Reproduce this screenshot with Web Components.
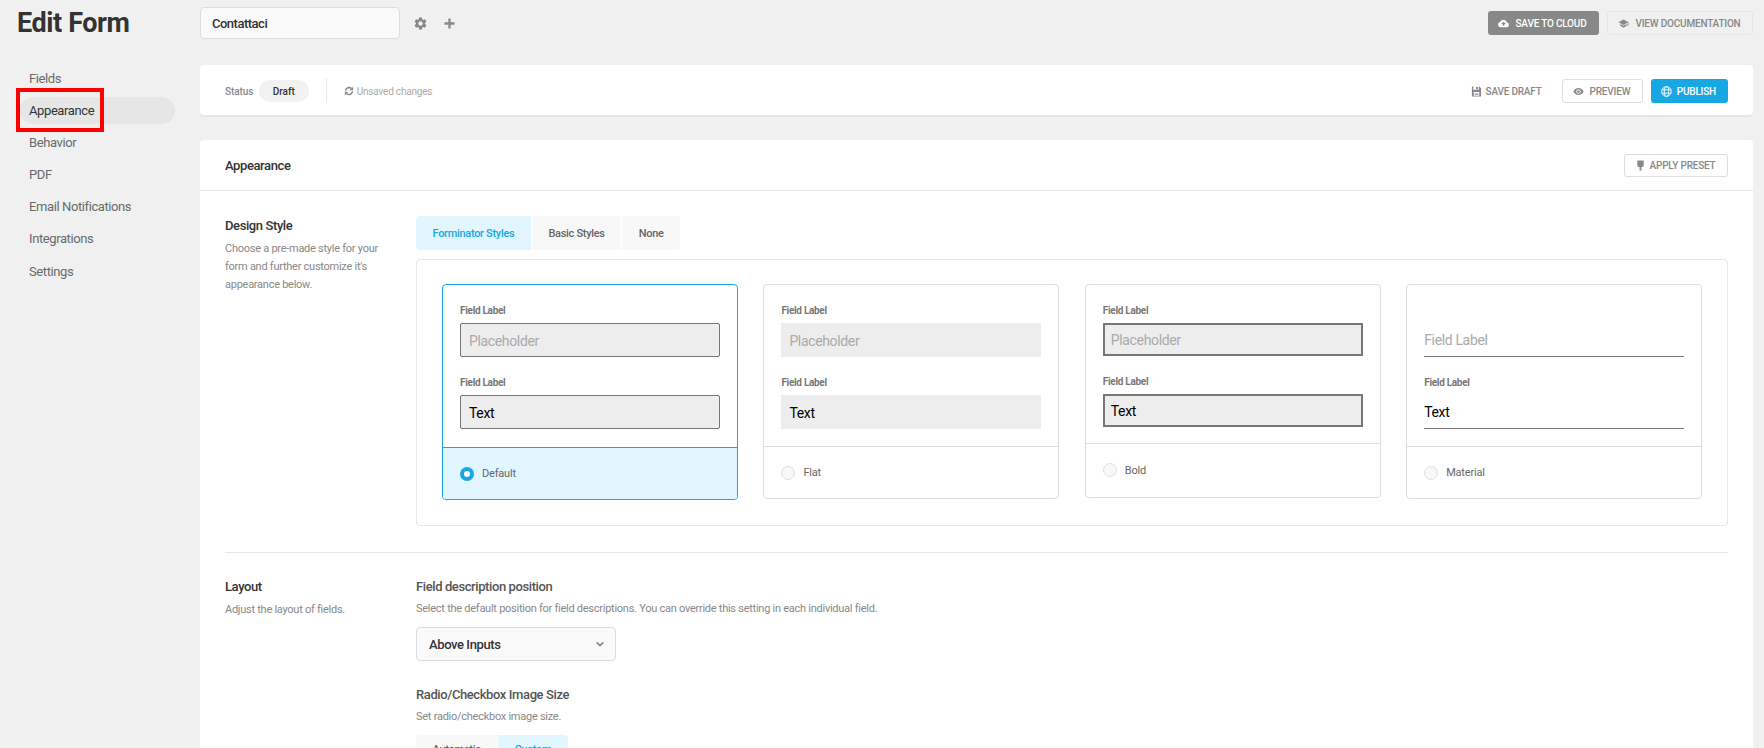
<!DOCTYPE html>
<html lang="en">
<head>
<meta charset="utf-8">
<title>Edit Form</title>
<style>
  html, body { margin: 0; height: 748px; overflow: hidden; background: #f0f0f0; }
  body { font-family: Roboto, "Liberation Sans", sans-serif; color: #333; }
</style>
</head>
<body>
<form-page>
  <nav-list slot="nav">
    <nav-item>Fields</nav-item>
    <nav-item active>Appearance</nav-item>
    <nav-item>Behavior</nav-item>
    <nav-item>PDF</nav-item>
    <nav-item>Email Notifications</nav-item>
    <nav-item>Integrations</nav-item>
    <nav-item>Settings</nav-item>
  </nav-list>

  <top-bar slot="top"></top-bar>
  <status-bar slot="main"></status-bar>

  <box-card slot="main" heading="Appearance">
    <ui-btn slot="action" kind="outline" icon="preset">Apply Preset</ui-btn>

    <settings-row heading="Design Style" text="Choose a pre-made style for your form and further customize it's appearance below.">
      <tab-group>
        <tab-item active>Forminator Styles</tab-item>
        <tab-item>Basic Styles</tab-item>
        <tab-item>None</tab-item>
      </tab-group>
      <style-panel>
        <style-card variant="default" selected>Default</style-card>
        <style-card variant="flat">Flat</style-card>
        <style-card variant="bold">Bold</style-card>
        <style-card variant="material">Material</style-card>
      </style-panel>
    </settings-row>

    <settings-row divided heading="Layout" text="Adjust the layout of fields.">
      <field-group heading="Field description position" text="Select the default position for field descriptions. You can override this setting in each individual field.">
        <select-box>Above Inputs</select-box>
      </field-group>
      <field-group heading="Radio/Checkbox Image Size" text="Set radio/checkbox image size." spaced>
        <tab-group style="--tab-text-top: 8px">
          <tab-item>Automatic</tab-item>
          <tab-item active>Custom</tab-item>
        </tab-group>
      </field-group>
    </settings-row>
  </box-card>
</form-page>

<script>
const ICONS = {
  gear: '<path fill="currentColor" d="M19.14 12.94c.04-.3.06-.61.06-.94 0-.32-.02-.64-.07-.94l2.03-1.58c.18-.14.23-.41.12-.61l-1.92-3.32c-.12-.22-.37-.29-.59-.22l-2.39.96c-.5-.38-1.03-.7-1.62-.94l-.36-2.54c-.04-.24-.24-.41-.48-.41h-3.84c-.24 0-.43.17-.47.41l-.36 2.54c-.59.24-1.13.57-1.62.94l-2.39-.96c-.22-.08-.47 0-.59.22L2.74 8.87c-.12.21-.08.47.12.61l2.03 1.58c-.05.3-.09.63-.09.94s.02.64.07.94l-2.03 1.58c-.18.14-.23.41-.12.61l1.92 3.32c.12.22.37.29.59.22l2.39-.96c.5.38 1.03.7 1.62.94l.36 2.54c.05.24.24.41.48.41h3.84c.24 0 .44-.17.47-.41l.36-2.54c.59-.24 1.13-.56 1.62-.94l2.39.96c.22.08.47 0 .59-.22l1.92-3.32c.12-.22.07-.47-.12-.61l-2.01-1.58zM12 15.6c-1.98 0-3.6-1.62-3.6-3.6s1.62-3.6 3.6-3.6 3.6 1.62 3.6 3.6-1.62 3.6-3.6 3.6z"/>',
  plus: '<path fill="none" stroke="currentColor" stroke-width="5" d="M12 1v22M1 12h22"/>',
  cloud: '<path fill="currentColor" d="M19.35 10.04C18.67 6.59 15.64 4 12 4 9.11 4 6.6 5.64 5.35 8.04 2.34 8.36 0 10.91 0 14c0 3.31 2.69 6 6 6h13c2.76 0 5-2.24 5-5 0-2.64-2.05-4.78-4.65-4.96zM14 13v4h-4v-4H7l5-5 5 5h-3z"/>',
  cap: '<path fill="currentColor" d="M5 13.18v4L12 21l7-3.82v-4L12 17l-7-3.82zM12 3L1 9l11 6 9-4.91V17h2V9L12 3z"/>',
  save: '<path fill="currentColor" fill-rule="evenodd" d="M2 1h3v7h12V1h1l4 4v18H2zM11 2h4v5h-4zM6 13v8h12v-8zM8 15h8v1.500H8zM8 18h8v1.500H8z"/>',
  eye: '<path fill="currentColor" d="M12 4.500C7 4.500 2.730 7.610 1 12c1.730 4.390 6 7.500 11 7.500s9.270-3.110 11-7.500c-1.730-4.390-6-7.500-11-7.500zM12 17c-2.760 0-5-2.240-5-5s2.240-5 5-5 5 2.240 5 5-2.240 5-5 5zm0-8c-1.660 0-3 1.340-3 3s1.340 3 3 3 3-1.340 3-3-1.340-3-3-3z"/>',
  globe: '<g fill="none" stroke="currentColor" stroke-width="2"><circle cx="12" cy="12" r="10.500"/><ellipse cx="12" cy="12" rx="4.800" ry="10.500"/><path d="M2 8.500h20M2 15.500h20"/></g>',
  preset: '<path fill="currentColor" d="M5 1h14v11a3 3 0 0 1-3 3h-2v8h-4v-8H8a3 3 0 0 1-3-3z"/>',
  sync: '<g fill="none" stroke="currentColor" stroke-width="3.500"><path d="M3.500 11A8.600 8.600 0 0 1 18 6.200"/><path d="M20.500 13A8.600 8.600 0 0 1 6 17.800"/></g><path fill="currentColor" d="M22 1.500V10h-8.500zM2 22.500V14h8.500z"/>',
  chevron: '<path fill="none" stroke="currentColor" stroke-width="4" d="M4 8l8 8 8-8"/>'
};

// shared helper, all elements below are plain shadow roots set in the class
class BaseEl extends HTMLElement {
  connectedCallback() {
    if (this.shadowRoot) return;
    this.attachShadow({ mode: 'open' }).innerHTML = this.render();
  }
}

class UiIcon extends BaseEl {
  render() {
    const size = this.getAttribute('size') || 11;
    return `
      <style>:host { display: inline-flex; flex: none; } svg { display: block; }</style>
      <svg width="${size}" height="${size}" viewBox="0 0 24 24">${ICONS[this.getAttribute('name')]}</svg>`;
  }
}

class UiBtn extends BaseEl {
  render() {
    return `
      <style>
        :host {
          display: inline-flex;
          align-items: center;
          gap: 6px;
          height: 24px;
          box-sizing: border-box;
          padding: 0 12px 0 10px;
          border-radius: 3px;
          font-size: 10px;
          font-weight: 500;
          letter-spacing: -0.2px;
          text-transform: uppercase;
          color: #888;
          white-space: nowrap;
        }
        :host([kind="dark"]) { background: #888; color: #fff; padding: 0 13px 0 10px; gap: 7px; }
        :host([kind="line"]) { border: 1.5px solid #e6e6e6; color: #888; padding: 0 11px 0 10px; }
        :host([kind="outline"]) { border: 1.5px solid #ddd; background: #fff; color: #888; padding: 0 12px 0 10px; }
        :host([kind="blue"]) { background: #17a8e3; color: #fff; gap: 4.500px; }
        :host([kind="plain"]) { padding: 0; gap: 4px; }
        :host([icon="preset"]) { height: 23px; gap: 4px; padding-right: 11.500px; }
      </style>
      <ui-icon name="${this.getAttribute('icon')}"></ui-icon>
      <slot></slot>`;
  }
}

class FormPage extends BaseEl {
  render() {
    return `
      <style>
        :host { display: flex; position: relative; height: 748px; overflow: hidden; }
        .side { width: 200px; flex: none; box-sizing: border-box; padding-top: 7px; }
        h1 {
          margin: 0 0 26px 17px;
          height: 32px;
          font-size: 27px;
          line-height: 32px;
          font-weight: 700;
          color: #333;
          letter-spacing: -0.4px;
        }
        .main { flex: 1; min-width: 0; margin-right: 11.5px; padding-top: 7px; }
        .stack { display: flex; flex-direction: column; gap: 25px; margin-top: 26px; }
        .marker {
          position: absolute;
          left: 16px;
          top: 88px;
          width: 88px;
          height: 44px;
          box-sizing: border-box;
          border: 4.5px solid #f00;
          pointer-events: none;
        }
      </style>
      <div class="side">
        <h1>Edit Form</h1>
        <slot name="nav"></slot>
      </div>
      <div class="main">
        <slot name="top"></slot>
        <div class="stack"><slot name="main"></slot></div>
      </div>
      <div class="marker"></div>`;
  }
}

class NavList extends BaseEl {
  render() {
    return `
      <style>:host { display: flex; flex-direction: column; gap: 5.100px; padding-left: 20px; width: 155px; }</style>
      <slot></slot>`;
  }
}

class NavItem extends BaseEl {
  render() {
    return `
      <style>
        :host {
          display: flex;
          align-items: center;
          height: 27px;
          padding-left: 9px;
          border-radius: 14px;
          font-size: 13px;
          letter-spacing: -0.4px;
          color: #6a6a6a;
        }
        :host([active]) { background: #e6e6e6; color: #333; }
      </style>
      <slot></slot>`;
  }
}

class TopBar extends BaseEl {
  render() {
    return `
      <style>
        :host { display: flex; align-items: center; height: 32px; color: #888; }
        .name {
          width: 200px;
          height: 32px;
          box-sizing: border-box;
          display: flex;
          align-items: center;
          padding-left: 11px;
          background: #fafafa;
          border: 1px solid #ddd;
          border-radius: 4px;
          font-size: 13px;
          font-weight: 500;
          letter-spacing: -0.5px;
          color: #333;
        }
        .tools { display: flex; align-items: center; gap: 16px; margin-left: 13px; }
        .end { margin-left: auto; display: flex; gap: 8px; }
      </style>
      <div class="name">Contattaci</div>
      <div class="tools">
        <ui-icon name="gear" size="15"></ui-icon>
        <ui-icon name="plus" size="11"></ui-icon>
      </div>
      <div class="end">
        <ui-btn kind="dark" icon="cloud">Save to Cloud</ui-btn>
        <ui-btn kind="line" icon="cap">View Documentation</ui-btn>
      </div>`;
  }
}

class StatusBar extends BaseEl {
  render() {
    return `
      <style>
        :host {
          display: flex;
          align-items: center;
          height: 50px;
          box-sizing: border-box;
          padding: 2px 24.500px 0 25px;
          background: #fff;
          border-radius: 4px;
          box-shadow: 0 2px 0 #e6e6e6;
        }
        .lbl { font-size: 10px; font-weight: 500; letter-spacing: -0.1px; color: #888; }
        .pill {
          margin-left: 5.500px;
          width: 50px;
          height: 22px;
          display: flex;
          align-items: center;
          justify-content: center;
          background: #f2f2f2;
          border-radius: 11px;
          font-size: 10px;
          font-weight: 500;
          color: #333;
        }
        .sep { width: 1px; height: 25px; background: #e6e6e6; margin: -2px 17px 0; }
        .saved { display: flex; align-items: center; gap: 3px; font-size: 10px; letter-spacing: -0.2px; color: #aaa; }
        .saved ui-icon { color: #888; }
        .end { margin-left: auto; display: flex; align-items: center; gap: 8px; }
        ui-btn[kind="plain"] { margin-right: 12px; }
      </style>
      <span class="lbl">Status</span>
      <span class="pill">Draft</span>
      <span class="sep"></span>
      <span class="saved"><ui-icon name="sync" size="10"></ui-icon>Unsaved changes</span>
      <div class="end">
        <ui-btn kind="plain" icon="save">Save Draft</ui-btn>
        <ui-btn kind="outline" icon="eye">Preview</ui-btn>
        <ui-btn kind="blue" icon="globe">Publish</ui-btn>
      </div>`;
  }
}

class BoxCard extends BaseEl {
  render() {
    return `
      <style>
        :host { display: block; background: #fff; border-radius: 4px; }
        header {
          display: flex;
          align-items: center;
          justify-content: space-between;
          height: 50px;
          padding: 0 24.500px 0 25px;
          border-bottom: 1px solid #e6e6e6;
        }
        h2 { margin: 0; font-size: 13px; font-weight: 500; letter-spacing: -0.4px; color: #333; }
        .body { padding: 25px 24.500px 0 25px; }
      </style>
      <header>
        <h2>${this.getAttribute('heading')}</h2>
        <slot name="action"></slot>
      </header>
      <div class="body"><slot></slot></div>`;
  }
}

class SettingsRow extends BaseEl {
  render() {
    return `
      <style>
        :host { display: grid; grid-template-columns: 191px 1fr; }
        :host([divided]) { margin-top: 26px; padding-top: 25px; border-top: 1px solid #e6e6e6; }
        h3 { margin: 1px 0 5px; font-size: 13px; line-height: 18px; font-weight: 500; letter-spacing: -0.4px; color: #333; }
        :host([divided]) h3 { margin: 0 0 4.500px; }
        p { margin: 0; width: 165px; font-size: 11px; line-height: 18px; letter-spacing: -0.26px; color: #888; }
      </style>
      <div>
        <h3>${this.getAttribute('heading')}</h3>
        <p>${this.getAttribute('text')}</p>
      </div>
      <div><slot></slot></div>`;
  }
}

class FieldGroup extends BaseEl {
  render() {
    return `
      <style>
        :host { display: block; }
        :host([spaced]) { margin-top: 25px; }
        h4 { margin: 0 0 4px; font-size: 13px; line-height: 18px; font-weight: 500; letter-spacing: -0.4px; color: #555; }
        p { margin: 0 0 9px; font-size: 11px; line-height: 18px; letter-spacing: -0.26px; color: #888; }
      </style>
      <h4>${this.getAttribute('heading')}</h4>
      <p>${this.getAttribute('text')}</p>
      <slot></slot>`;
  }
}

class TabGroup extends BaseEl {
  render() {
    return `
      <style>
        :host { display: flex; gap: 1px; width: max-content; border-radius: 4px; overflow: hidden; }
      </style>
      <slot></slot>`;
  }
}

class TabItem extends BaseEl {
  render() {
    return `
      <style>
        :host {
          display: flex;
          align-items: flex-start;
          height: 34px;
          box-sizing: border-box;
          padding: var(--tab-text-top, 11px) 16.500px 0;
          background: #f8f8f8;
          font-size: 11px;
          line-height: 13px;
          font-weight: 500;
          letter-spacing: -0.3px;
          color: #666;
        }
        :host([active]) { background: #e1f6ff; color: #17a8e3; }
      </style>
      <slot></slot>`;
  }
}

class SelectBox extends BaseEl {
  render() {
    return `
      <style>
        :host {
          display: flex;
          align-items: center;
          justify-content: space-between;
          width: 200px;
          height: 34px;
          box-sizing: border-box;
          padding: 0 10px 0 12px;
          background: #fafafa;
          border: 1px solid #ddd;
          border-radius: 4px;
          font-size: 13px;
          font-weight: 500;
          letter-spacing: -0.4px;
          color: #333;
        }
        ui-icon { color: #888; }
      </style>
      <slot></slot>
      <ui-icon name="chevron" size="10"></ui-icon>`;
  }
}

class StylePanel extends BaseEl {
  render() {
    return `
      <style>
        :host {
          display: grid;
          grid-template-columns: repeat(4, 1fr);
          gap: 25.600px;
          align-items: start;
          margin-top: 9px;
          padding: 24px 25px 25px;
          border: 1px solid #e6e6e6;
          border-radius: 4px;
        }
      </style>
      <slot></slot>`;
  }
}

class PreviewField extends BaseEl {
  render() {
    const label = this.getAttribute('label');
    return `
      <style>
        :host { display: block; }
        label {
          display: block;
          height: 14px;
          margin-bottom: 6px;
          font-size: 10px;
          line-height: 15px;
          font-weight: 700;
          letter-spacing: -0.3px;
          color: #777;
        }
        .box {
          display: flex;
          align-items: center;
          height: 34px;
          box-sizing: border-box;
          padding: 1px 8px 0;
          background: #ededed;
          font-size: 14px;
          letter-spacing: -0.35px;
          color: #000;
        }
        :host([muted]) .box { color: #aaa; }
        :host([variant="default"]) .box { border: 1px solid #777; border-radius: 2px; }
        :host([variant="bold"]) .box { height: 33px; padding: 0 6px; border: 2px solid #777; }
        :host([variant="material"]) .box { background: none; padding: 1px 0 0; border-bottom: 1px solid #777; }
      </style>
      <label>${label || ''}</label>
      <div class="box"><slot></slot></div>`;
  }
}

class StyleCard extends BaseEl {
  render() {
    const v = this.getAttribute('variant');
    const topLabel = v === 'material' ? '' : 'label="Field Label"';
    const topText = v === 'material' ? 'Field Label' : 'Placeholder';
    return `
      <style>
        :host { display: block; box-sizing: border-box; border: 1px solid #ddd; border-radius: 4px; overflow: hidden; }
        :host([selected]) { border-color: #17a8e3; }
        .fields { display: flex; flex-direction: column; gap: 18px; padding: 18px 17px 17px; }
        :host([variant="default"]) .fields { padding-bottom: 18px; }
        :host([variant="bold"]) .fields { padding-bottom: 16px; }
        .foot {
          display: flex;
          align-items: center;
          gap: 8px;
          height: 52px;
          box-sizing: border-box;
          padding: 0 17px;
          border-top: 1px solid #ddd;
          font-size: 11px;
          letter-spacing: -0.2px;
          color: #666;
        }
        :host([variant="bold"]) .foot { height: 53.500px; }
        :host([selected]) .foot { background: #e1f6ff; border-top-color: #17a8e3; }
        .radio {
          width: 14px;
          height: 14px;
          box-sizing: border-box;
          border-radius: 50%;
          background: #f8f8f8;
          border: 1px solid #e0e0e0;
        }
        :host([selected]) .radio { background: #fff; border: 4.500px solid #17a8e3; }
      </style>
      <div class="fields">
        <preview-field variant="${v}" ${topLabel} muted>${topText}</preview-field>
        <preview-field variant="${v}" label="Field Label">Text</preview-field>
      </div>
      <div class="foot"><span class="radio"></span><slot></slot></div>`;
  }
}

customElements.define('ui-icon', UiIcon);
customElements.define('ui-btn', UiBtn);
customElements.define('form-page', FormPage);
customElements.define('nav-list', NavList);
customElements.define('nav-item', NavItem);
customElements.define('top-bar', TopBar);
customElements.define('status-bar', StatusBar);
customElements.define('box-card', BoxCard);
customElements.define('settings-row', SettingsRow);
customElements.define('field-group', FieldGroup);
customElements.define('tab-group', TabGroup);
customElements.define('tab-item', TabItem);
customElements.define('select-box', SelectBox);
customElements.define('style-panel', StylePanel);
customElements.define('preview-field', PreviewField);
customElements.define('style-card', StyleCard);
</script>
</body>
</html>
